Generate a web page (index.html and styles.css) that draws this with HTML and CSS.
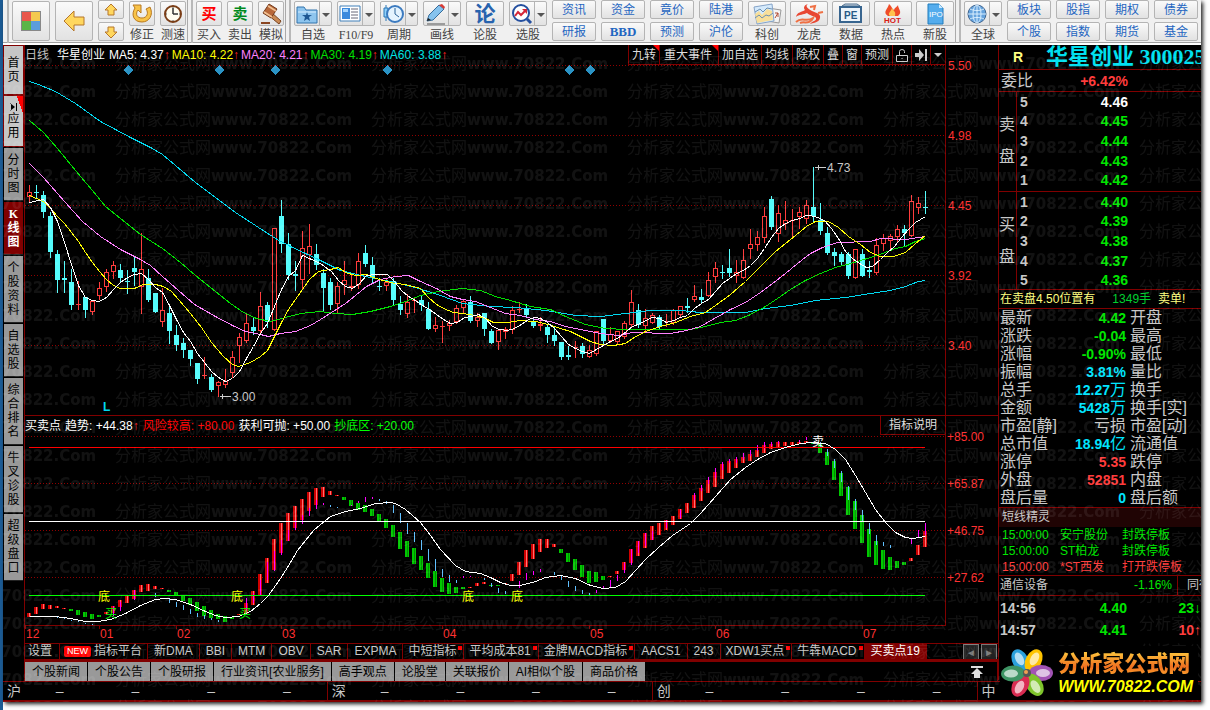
FILE: index.html
```html
<!DOCTYPE html>
<html lang="zh-CN">
<head>
    <meta charset="UTF-8">
    <meta name="viewport" content="width=device-width, initial-scale=1.0">
    <title>华星创业 300025 - 日线</title>
    <link rel="stylesheet" href="styles.css">
</head>
<body>
<div class="window">

    <header class="toolbar">
        <div class="group">
            <button class="tool tall" aria-label="首页"><svg width="22" height="22" viewBox="0 0 22 22"><rect x="1" y="1" width="20" height="20" fill="#888"/><rect x="2" y="2" width="9" height="9" fill="#e8584c"/><rect x="11" y="2" width="9" height="9" fill="#f3c94f"/><rect x="2" y="11" width="9" height="9" fill="#5cb548"/><rect x="11" y="11" width="9" height="9" fill="#5b9ddb"/></svg></button>
            <button class="tool tall" aria-label="后退"><svg width="22" height="22" viewBox="0 0 22 22"><path d="M1 11 11 1v6h10v8H11v6z" fill="#ffd75e" stroke="#b5762c"/></svg></button>
            <div class="pair narrow">
                <button aria-label="上"><svg width="14" height="14" viewBox="0 0 14 14"><path d="M7 1l6 6h-3v5H4V7H1z" fill="#ffd75e" stroke="#b5762c"/></svg></button>
                <button aria-label="下"><svg width="14" height="14" viewBox="0 0 14 14"><path d="M7 13l6-6h-3V2H4v5H1z" fill="#ffd75e" stroke="#b5762c"/></svg></button>
            </div>
            <button class="tool"><span class="face"><svg width="22" height="22" viewBox="0 0 22 22"><path d="M2 2h8v8L7 7c-3 4-1 8 4 8s7-5 4-9l4-2c4 8-1 15-8 15C2 19 0 11 4 5z" fill="#f8c348" stroke="#b87920"/></svg></span>修正</button>
            <button class="tool"><span class="face"><svg width="20" height="20" viewBox="0 0 20 20"><circle cx="10" cy="10" r="8" fill="#fffdf0" stroke="#7a3d16" stroke-width="2"/><path d="M10 10V4M10 10h5" stroke="#333" stroke-width="1.5"/><path d="M10 3v1M10 16v1M3 10h1M16 10h1" stroke="#555"/></svg></span>测速</button>
        </div>

        <div class="group">
            <button class="tool"><span class="face red">买</span>买入</button>
            <button class="tool"><span class="face green">卖</span>卖出</button>
            <button class="tool"><span class="face"><svg width="24" height="22" viewBox="0 0 24 22"><path d="M12 9l10 9-2 3L9 12z" fill="#c98a55" stroke="#7a4520"/><path d="M10 1l8 5-6 9-8-5z" fill="#b8683a" stroke="#70381a"/><path d="M9 3l8 5M5 9l8 5" stroke="#f2c293" stroke-width="1.5"/><path d="M2 20h9" stroke="#8a4520" stroke-width="2"/></svg></span>模拟</button>
        </div>

        <div class="group">
            <button class="tool split"><span class="face"><svg width="22" height="20" viewBox="0 0 22 20"><path d="M1 3h7l2 3h11v13H1z" fill="#8ec5ee" stroke="#3275ad"/><path d="M2 8h18" stroke="#d6edff"/><path d="M11 8l1 3h4l-3 2 1 4-3-2-3 2 1-4-3-2h4z" fill="#1d5793"/></svg></span><i></i>自选</button>
            <button class="tool split serif"><span class="face"><svg width="22" height="20" viewBox="0 0 22 20"><path d="M1 2h20v15H1z" fill="#fff" stroke="#4180ba"/><path d="M3 4h8v6H3zM3 10h8v5H3z" fill="#3c8add"/><path d="M4 5h5v3H4z" fill="#a4d4ff"/><path d="M12 5h7M12 8h7M12 11h7M12 14h7" stroke="#667"/></svg></span><i></i>F10/F9</button>
            <button class="tool split"><span class="face"><svg width="22" height="22" viewBox="0 0 22 22"><path d="M4 2v16" stroke="#2b76b6"/><path d="M2 5h4v9H2z" fill="#8fd1fa" stroke="#2b76b6"/><circle cx="13" cy="11" r="8" fill="#e5f4ff" stroke="#3c7bc0" stroke-width="2"/><path d="M13 5v6l4 3" fill="none" stroke="#2b6297"/></svg></span><i></i>周期</button>
            <button class="tool split"><span class="face"><svg width="22" height="22" viewBox="0 0 22 22"><path d="M2 21h18" stroke="#555"/><path d="M2 18l2-6L14 2l5 4L8 17z" fill="#86c3ee" stroke="#366d9c"/><path d="M14 2l3-1 3 3-1 2z" fill="#d83b35"/><path d="M2 18l1-3 3 2z" fill="#222"/></svg></span><i></i>画线</button>
            <button class="tool wide"><span class="face lun">论</span>论股</button>
            <button class="tool split"><span class="face"><svg width="22" height="22" viewBox="0 0 22 22"><circle cx="10" cy="10" r="8" fill="#fff" stroke="#244f9f" stroke-width="2"/><path d="M16 16l4 4" stroke="#244f9f" stroke-width="3"/><path d="M4 13l3-4 3 3 5-5" fill="none" stroke="#d52638" stroke-width="2"/><path d="M11 6h5v5z" fill="#d52638"/></svg></span><i></i>选股</button>
            <div class="pair"><button>资讯</button><button>研报</button></div>
            <div class="pair"><button>资金</button><button class="bbd">BBD</button></div>
            <div class="pair"><button>竟价</button><button>预测</button></div>
            <div class="pair"><button>陆港</button><button>沪伦</button></div>
            <div class="tools">
                <button class="tool wide"><span class="face"><svg width="30" height="22" viewBox="0 0 30 22"><path d="M16 5l13 2-2 13-12-2z" fill="#f4f4f4" stroke="#999"/><path d="M2 4l18-3 2 17-17 3z" fill="#d5eafc" stroke="#86a4c8"/><path d="M3 11l4-3 3 4 5-6 5 2 1 9-16 3z" fill="#f8df9a"/><path d="M3 15l4-3 3 3 4-3 3 1 4-3M3 9l5-3 3 3 4-4 5 1" fill="none" stroke="#6d91b3"/><path d="M23 15l3-5m-3 0h3v4" stroke="#b34c35" fill="none"/></svg></span>科创</button>
                <button class="tool wide"><span class="face"><svg width="30" height="22" viewBox="0 0 30 22"><path d="M14 1c-3 2-1 4 4 7 5 2 9 3 8 7-1 5-8 5-10 6 2-3 7-3 6-6-1-2-6-2-9-5-3 2-8 1-11 4 1-5 6-5 9-7-2-2-1-5 3-6z" fill="#e84833"/><path d="M2 19c6-6 10 1 17-4-3 7-9 3-13 5M16 4l5-1-1 4M24 10l5-1" fill="none" stroke="#ef7044" stroke-width="2"/></svg></span>龙虎</button>
                <button class="tool wide"><span class="face"><svg width="24" height="22" viewBox="0 0 24 22"><path d="M3 3l3-2h12l3 2z" fill="#ccd9e6" stroke="#51718f"/><rect x="1" y="4" width="21" height="15" fill="#eef5fb" stroke="#38658f" stroke-width="2"/><text x="5" y="16" class="pe">PE</text></svg></span>数据</button>
                <button class="tool wide"><span class="face"><svg width="24" height="22" viewBox="0 0 24 22"><path d="M7 13C1 9 7 6 8 1c4 4 3 5 5 6 1-3 3-3 4-5 0 4 5 7 0 11z" fill="#ef4c28"/><path d="M9 13c-3-3 1-4 2-8 2 4 4 3 3 8z" fill="#ffc34d"/><text x="3" y="20" class="hot">HOT</text></svg></span>热点</button>
                <button class="tool wide"><span class="face"><svg width="20" height="22" viewBox="0 0 20 22"><path d="M3 1h11l4 4v16H3z" fill="#54aced" stroke="#217cbc"/><path d="M14 1v4h4z" fill="#cceaff"/><text x="4" y="14" class="ipo">IPO</text></svg></span>新股</button>
            </div>
        </div>

        <div class="group">
            <button class="tool split"><span class="face"><svg width="22" height="22" viewBox="0 0 22 22"><circle cx="11" cy="11" r="9" fill="#66a3dd" stroke="#40658f"/><ellipse cx="11" cy="11" rx="4" ry="9" fill="none" stroke="#d9efff"/><path d="M2 11h18M4 6c4 2 10 2 14 0M4 16c4-2 10-2 14 0M11 2v18" fill="none" stroke="#d9efff"/></svg></span><i></i>全球</button>
            <div class="pair"><button>板块</button><button>个股</button></div>
            <div class="pair"><button>股指</button><button>指数</button></div>
            <div class="pair"><button>期权</button><button>期货</button></div>
            <div class="pair"><button>债券</button><button>基金</button></div>
        </div>
    </header>

    <main class="main">
        <nav class="sidebar">
            <button class="light home">首页</button>
            <button class="light apps"><svg width="8" height="8" viewBox="0 0 8 8"><path d="M0 0v8l5-4zM6 0h1v8H6zM0 0h1v8H0z"/></svg>应用</button>
            <button>分时图</button>
            <button class="active">K线图</button>
            <button>个股资料</button>
            <button>自选股</button>
            <button>综合排名</button>
            <button>牛叉诊股</button>
            <button>超级盘口</button>
        </nav>

        <section class="center">
            <div class="chart-head">
                <div class="info">
                    <span class="muted period">日线</span>
                    <span class="white name">华星创业</span>
                    <span class="white">MA5: 4.37<b>↑</b></span>
                    <span class="yellow">MA10: 4.22<b>↑</b></span>
                    <span class="pink">MA20: 4.21<b>↑</b></span>
                    <span class="lime">MA30: 4.19<b>↑</b></span>
                    <span class="aqua">MA60: 3.88<b>↑</b></span>
                </div>
                <div class="chart-tools">
                    <button class="flag">九转</button>
                    <button class="flag roomy">重大事件</button>
                    <button>加自选</button>
                    <button>均线</button>
                    <button>除权</button>
                    <button>叠</button>
                    <button>窗</button>
                    <button>预测</button>
                    <button aria-label="解锁"><svg width="12" height="14" viewBox="0 0 12 14"><path d="M.5 7.500h11v6H.5zM3.500 7V3.500q0-2 2.500-2t2.500 2V5M6 10v1" fill="none" stroke="#ccc"/></svg></button>
                    <button aria-label="到最后"><svg width="12" height="12" viewBox="0 0 12 12"><path d="M0 4h4V0l5 6-5 6V8H0zM10 0h2v12h-2z" fill="#ccc"/></svg></button>
                    <button class="drop" aria-label="更多"><svg width="8" height="4" viewBox="0 0 8 4"><path d="M0 0h8L4 4z" fill="#ccc"/></svg></button>
                </div>
            </div>
            <svg class="chart" id="price-chart" viewBox="25 65 973 350"></svg>

            <div class="chart-head sub">
                <div class="info">
                    <span class="white">买卖点</span>
                    <span class="white">趋势: +44.38<b>↑</b></span>
                    <span class="red">风险较高: +80.00</span>
                    <span class="white">获利可抛: +50.00</span>
                    <span class="bright">抄底区: +20.00</span>
                </div>
                <div class="chart-tools"><button class="explain">指标说明</button></div>
            </div>
            <svg class="chart" id="trend-chart" viewBox="25 435 973 208"></svg>

            <nav class="indicators">
                <button>设置</button>
                <button class="first"><em>NEW</em>指标平台</button>
                <button>新DMA</button>
                <button>BBI</button>
                <button>MTM</button>
                <button>OBV</button>
                <button>SAR</button>
                <button>EXPMA</button>
                <button class="dot">中短指标</button>
                <button class="dot">平均成本81</button>
                <button class="dot">金牌MACD指标</button>
                <button>AACS1</button>
                <button>243</button>
                <button class="dot">XDW1买点</button>
                <button class="dot">牛犇MACD</button>
                <button class="active">买卖点19</button>
                <span class="pager"><button aria-label="左">◄</button><button aria-label="右">►</button></span>
            </nav>
            <nav class="news">
                <button>个股新闻</button>
                <button>个股公告</button>
                <button>个股研报</button>
                <button>行业资讯[农业服务]</button>
                <button>高手观点</button>
                <button>论股堂</button>
                <button>关联报价</button>
                <button>AI相似个股</button>
                <button>商品价格</button>
                <svg class="to-top" width="12" height="12" viewBox="0 0 12 12"><path d="M0 0h12v2H0zM6 2l6 6H9v4H3V8H0z" fill="#ddd"/></svg>
            </nav>
        </section>

        <aside class="quote">
            <h1><small>R</small>华星创业 300025</h1>
            <p class="ratio"><span>委比</span><b class="up">+6.42%</b></p>
            <div class="book">
                <div class="side">卖<br>盘</div>
                <table>
                    <tr><th>5</th><td class="white">4.46</td></tr>
                    <tr><th>4</th><td>4.45</td></tr>
                    <tr><th>3</th><td>4.44</td></tr>
                    <tr><th>2</th><td>4.43</td></tr>
                    <tr><th>1</th><td>4.42</td></tr>
                </table>
            </div>
            <div class="book buy">
                <div class="side">买<br>盘</div>
                <table>
                    <tr><th>1</th><td>4.40</td></tr>
                    <tr><th>2</th><td>4.39</td></tr>
                    <tr><th>3</th><td>4.38</td></tr>
                    <tr><th>4</th><td>4.37</td></tr>
                    <tr><th>5</th><td>4.36</td></tr>
                </table>
            </div>
            <p class="notice">在卖盘4.50位置有<span>1349手</span>卖单!</p>
            <table class="stats">
                <tr><th>最新</th><td class="down">4.42</td><th>开盘</th></tr>
                <tr><th>涨跌</th><td class="down">-0.04</td><th>最高</th></tr>
                <tr><th>涨幅</th><td class="down">-0.90%</td><th>最低</th></tr>
                <tr><th>振幅</th><td>3.81%</td><th>量比</th></tr>
                <tr><th>总手</th><td>12.27<span>万</span></td><th>换手</th></tr>
                <tr><th>金额</th><td>5428<span>万</span></td><th>换手[实]</th></tr>
                <tr><th>市盈[静]</th><td class="muted"><span>亏损</span></td><th>市盈[动]</th></tr>
                <tr><th>总市值</th><td>18.94<span>亿</span></td><th>流通值</th></tr>
                <tr><th>涨停</th><td class="up">5.35</td><th>跌停</th></tr>
                <tr><th>外盘</th><td class="up">52851</td><th>内盘</th></tr>
                <tr><th>盘后量</th><td>0</td><th>盘后额</th></tr>
            </table>
            <h2>短线精灵</h2>
            <table class="alerts">
                <tr><td>15:00:00</td><td>安宁股份</td><td>封跌停板</td></tr>
                <tr><td>15:00:00</td><td>ST柏龙</td><td>封跌停板</td></tr>
                <tr class="up"><td>15:00:00</td><td>*ST西发</td><td>打开跌停板</td></tr>
            </table>
            <p class="sector"><span>通信设备</span><span class="down">-1.16%</span><a href="#">同行</a></p>
            <table class="ticks">
                <tr><th>14:56</th><td>4.40</td><td>23<i>↓</i></td></tr>
                <tr><th>14:57</th><td>4.41</td><td class="up">10<i>↑</i></td></tr>
            </table>
        </aside>
    </main>

    <footer class="status">
        <div><span>沪</span><i>–</i><i>–</i><i>–</i><i>–</i></div>
        <div><span>深</span><i>–</i><i>–</i><i>–</i><i>–</i></div>
        <div><span>创</span><i>–</i><i>–</i><i>–</i><i>–</i></div>
        <div class="last"><span>中</span></div>
    </footer>

    <svg class="watermark" aria-hidden="true">
        <defs>
            <pattern id="mark" x="112" y="3" width="256" height="28" patternUnits="userSpaceOnUse">
                <text x="0" y="21">分析家公式网<tspan>www.70822.Com</tspan></text>
            </pattern>
        </defs>
        <rect width="100%" height="100%" fill="url(#mark)"/>
    </svg>

    <div class="brand">
        <svg width="54" height="54" viewBox="0 0 54 54">
            <defs><ellipse id="petal" cx="27" cy="13" rx="8" ry="12"/><ellipse id="shine" cx="27" cy="11" rx="4" ry="7" fill="#fff" opacity=".65"/></defs>
            <g><use href="#petal" fill="#2aa0dc" transform="rotate(-28 27 27)"/><use href="#shine" transform="rotate(-28 27 27)"/></g>
            <g><use href="#petal" fill="#ffc400" transform="rotate(28 27 27)"/><use href="#shine" transform="rotate(28 27 27)"/></g>
            <g><use href="#petal" fill="#a253b4" transform="rotate(90 27 27)"/><use href="#shine" transform="rotate(90 27 27)"/></g>
            <g><use href="#petal" fill="#7fc52c" transform="rotate(148 27 27)"/><use href="#shine" transform="rotate(148 27 27)"/></g>
            <g><use href="#petal" fill="#d92c52" transform="rotate(208 27 27)"/><use href="#shine" transform="rotate(208 27 27)"/></g>
            <g><use href="#petal" fill="#3e9464" transform="rotate(268 27 27)"/><use href="#shine" transform="rotate(268 27 27)"/></g>
            <circle cx="27" cy="27" r="4" fill="#555"/><circle cx="26" cy="26" r="2" fill="#f0a050"/>
        </svg>
        <div><strong>分析家公式网</strong><span>WWW.70822.COM</span></div>
    </div>
</div>
<script src="chart.js"></script>
</body>
</html>
```
FILE: styles.css
```css
* {
    box-sizing: border-box;
}
body {
    margin: 0;
    padding: 0 9px 8px 3px;
    background: linear-gradient(to right, #1c5c96 3px, #fff 3px);
    font-family: "Liberation Sans", "Noto Sans CJK SC", sans-serif;
    font-size: 12px;
    line-height: 16px;
    color: #c8c8c8;
}
h1, h2, p {
    margin: 0;
    font-weight: normal;
}
button {
    margin: 0;
    padding: 0;
    border: 0;
    background: none;
    font: inherit;
    color: inherit;
    white-space: nowrap;
    cursor: pointer;
}
svg {
    display: block;
}
table {
    border-collapse: collapse;
}
td, th {
    padding: 0;
    font-weight: normal;
    text-align: left;
    white-space: nowrap;
}
.window {
    position: relative;
    overflow: hidden;
    background: #000;
    box-shadow: 2px 2px 4px #222;
}

.white { color: #fff; }
.yellow { color: #ff0; }
.pink { color: #ff80ff; }
.lime { color: #00e000; }
.bright { color: #0f0; }
.aqua { color: #00e5e5; }
.red { color: #f00; }
.up { color: #ff3c3c; }
.down { color: #00e600; }
.muted { color: #c0c0c0; }

/* toolbar */
.toolbar {
    display: flex;
    height: 45px;
    overflow: hidden;
    background: #f0f0f0;
    border-bottom: 2px solid #fff;
    box-shadow: inset 0 -1px #a0a0a0;
    color: #444;
}
.group {
    display: flex;
    flex: none;
    gap: 5px;
    padding: 0 1px 0 3px;
    margin-left: 3px;
    border-left: 2px solid #b8b8b8;
    border-right: 1px solid #aaa;
}
.group:first-child {
    margin-left: 4px;
}
.group:last-child {
    border-right: 0;
}
.tools {
    display: flex;
    gap: 4px;
}
.tool {
    position: relative;
    display: flex;
    flex-direction: column;
    align-items: center;
    gap: 1px;
    width: 26px;
    height: 43px;
    padding-top: 1px;
}
.split, .wide, .tall {
    width: 38px;
}
.face, .tall, .pair button {
    display: flex;
    align-items: center;
    justify-content: center;
    border: 1px solid #b4b4b4;
    border-radius: 2px;
    background: linear-gradient(#fafafa, #e2e2e2);
}
.face {
    width: 100%;
    height: 25px;
    flex: none;
}
.tall {
    height: 40px;
    padding: 0;
    margin-top: 1px;
}
.split .face {
    padding-right: 12px;
}
.split i {
    position: absolute;
    top: 2px;
    right: 0;
    width: 13px;
    height: 23px;
    border-left: 1px solid #b4b4b4;
}
.split i::after {
    content: "";
    position: absolute;
    top: 11px;
    left: 2px;
    border: 4px solid transparent;
    border-top-color: #555;
    border-bottom: 0;
}
.face.red, .face.green {
    font-size: 15px;
    font-weight: bold;
}
.face.green {
    color: #008a20;
}
.face.lun {
    font-size: 21px;
    font-weight: bold;
    color: #2863ae;
}
.serif {
    font-family: "Liberation Serif", serif;
}
.pair {
    display: grid;
    grid-template-rows: 19px 19px;
    gap: 3px;
    width: 44px;
    color: #1f66c1;
}
.narrow {
    width: 26px;
}
.bbd {
    font-family: "Liberation Serif", serif;
    font-weight: bold;
    font-size: 13px;
}
.pe {
    font: bold 10px "Liberation Sans", sans-serif;
    fill: #285a88;
}
.hot {
    font: bold 8px "Liberation Sans", sans-serif;
    fill: #d82015;
}
.ipo {
    font: 8px "Liberation Sans", sans-serif;
    fill: #fff;
}

/* main area */
.main {
    display: flex;
}
.sidebar {
    display: flex;
    flex-direction: column;
    flex: none;
    gap: 1px;
    width: 22px;
    padding: 1px 1px 0;
    border-right: 1px solid #800000;
}
.sidebar button {
    display: flex;
    align-items: center;
    justify-content: center;
    padding: 5px 3px;
    background: #999;
    color: #000;
    line-height: 14px;
    white-space: normal;
    word-break: break-all;
}
.sidebar button:not(.light) {
    border-bottom: 1px solid #222;
}
.sidebar .light {
    flex-direction: column;
    background: #c6c6c6;
    outline: 1px solid #800000;
    margin-bottom: 1px;
}
.sidebar .home {
    padding: 10px 3px;
}
.sidebar .apps {
    background: linear-gradient(to bottom left, red 6px, #c6c6c6 6px);
    padding: 7px 3px 6px;
    gap: 1px;
}
.sidebar .active {
    background: #800000;
    color: #fff;
    font-family: "Liberation Serif", "Noto Sans CJK SC", serif;
    font-weight: bold;
}
.center {
    flex: 1;
    min-width: 0;
}
.chart {
    width: 100%;
    height: auto;
    overflow: visible;
    font-size: 12px;
}
.chart-head {
    display: flex;
    justify-content: space-between;
    height: 20px;
    margin-right: 52px;
    border-right: 1px solid #800000;
}
.sub {
    position: relative;
}
.sub::before {
    content: "";
    position: absolute;
    left: 0;
    right: -53px;
    border-top: 1px solid #800000;
}
.info {
    display: flex;
    gap: 2px;
    line-height: 20px;
    white-space: nowrap;
}
.sub .info {
    gap: 4px;
    line-height: 22px;
}
.info b {
    color: #ff2020;
}
.info .period {
    margin-right: 6px;
}
.info .name {
    margin-right: 2px;
}
.chart-tools {
    display: flex;
    border-bottom: 1px solid #800000;
    color: #ddd;
}
.chart-tools button {
    position: relative;
    padding: 0 3px;
    border-left: 1px solid #800000;
}
.chart-tools .roomy {
    padding: 0 6px 0 4px;
}
.flag::after {
    content: "";
    position: absolute;
    top: 0;
    right: 0;
    border: 3px solid red;
    border-left-color: transparent;
    border-bottom-color: transparent;
}
.chart-tools .explain {
    padding: 0 8px;
}

/* chart drawing */
.grid { stroke: #900000; stroke-dasharray: 1 2; }
.frame { stroke: #800000; fill: none; }
.axis { fill: #ff3030; }
.note { fill: #c8c8c8; }
.chart path, .chart rect, .chart line {
    shape-rendering: crispEdges;
}
.line { fill: none; stroke-width: 1; }

/* indicator tabs */
.indicators {
    display: flex;
    height: 19px;
    border-top: 1px solid #800000;
    border-bottom: 3px solid #800000;
    line-height: 15px;
}
.indicators > button {
    position: relative;
    padding: 0 6px;
    border-right: 1px solid #800000;
}
.indicators > button:first-child {
    padding: 0 7px 0 3px;
}
.indicators .first {
    padding: 0 5px 0 4px;
}
.indicators .active {
    background: #800000;
    color: #fff;
}
.indicators em {
    display: inline-block;
    margin-right: 3px;
    padding: 0 3px;
    border-radius: 2px;
    background: red;
    color: #fff;
    font-size: 9px;
    font-style: normal;
    line-height: 11px;
    vertical-align: 1px;
}
.dot::after {
    content: "";
    position: absolute;
    top: 2px;
    right: 1px;
    width: 4px;
    height: 4px;
    background: red;
}
.indicators .dot {
    padding: 0 7px 0 5px;
}
.pager {
    display: flex;
    gap: 2px;
    margin-left: auto;
    margin-right: 1px;
}
.pager button {
    width: 16px;
    border: 1px solid #777;
    border-bottom: 0;
    background: #222;
    color: #777;
    font-size: 10px;
    line-height: 13px;
}
.news {
    display: flex;
    height: 19px;
    gap: 1px;
    border-right: 1px solid #800000;
}
.news button {
    padding: 0 7px;
    background: #999;
    color: #000;
    line-height: 18px;
}
.to-top {
    margin: 4px 14px 0 auto;
}

/* quote panel */
.quote {
    flex: none;
    width: 203px;
    height: 635px;
    overflow: hidden;
    border-left: 1px solid #800000;
}
.quote h1 {
    height: 24px;
    padding-left: 14px;
    font: bold 22px/24px "Liberation Serif", "Noto Sans CJK SC", serif;
    color: #00e0f0;
    white-space: nowrap;
}
.quote small {
    display: inline-block;
    width: 33px;
    font: bold 14px/24px "Liberation Sans", sans-serif;
    color: #ffff80;
    vertical-align: top;
}
.ratio {
    display: flex;
    justify-content: space-between;
    height: 23px;
    padding: 0 73px 0 2px;
    border: solid #800000;
    border-width: 1px 0;
    font-size: 16px;
    line-height: 22px;
}
.ratio b {
    font-size: 14px;
}
.book {
    display: flex;
    height: 99px;
    font-size: 14px;
    line-height: 18px;
}
.book.buy {
    border-top: 1px solid #800000;
    border-bottom: 1px solid #800000;
}
.side {
    width: 18px;
    padding-top: 17px;
    border-right: 1px solid #800000;
    font-size: 16px;
    line-height: 32px;
}
.book table {
    width: 111px;
    height: 98px;
}
.book th, .book td {
    font-weight: bold;
}
.book th {
    padding-left: 3px;
}
.book td {
    text-align: right;
    color: #00e600;
}
.book td.white {
    color: #fff;
}
.notice {
    height: 19px;
    padding-left: 1px;
    border-bottom: 1px solid #800000;
    color: #ffff80;
    line-height: 18px;
    white-space: nowrap;
}
.notice span {
    margin: 0 7px 0 17px;
    color: #00d030;
}
.stats {
    width: 202px;
    table-layout: fixed;
    font-size: 16px;
    line-height: 18px;
}
.stats td {
    width: 68px;
    text-align: right;
    font-size: 14px;
    font-weight: bold;
    color: #00e5ff;
}
.stats th {
    width: 59px;
    padding-left: 1px;
}
.stats td + th {
    width: 75px;
    padding-left: 4px;
}
.stats td span {
    font-size: 16px;
    font-weight: normal;
}
.stats td.up { color: #ff3c3c; }
.stats td.down { color: #00e600; }
.stats td.muted { color: #c8c8c8; }
.quote h2 {
    height: 20px;
    padding-left: 3px;
    border-top: 1px solid #800000;
    background: #200404;
    font-size: 12px;
    line-height: 19px;
}
.alerts {
    width: 202px;
    color: #00e600;
}
.alerts td {
    width: 62px;
    padding-left: 1px;
}
.alerts td:first-child {
    width: 60px;
    padding-left: 3px;
}
.alerts td:last-child {
    width: 80px;
}
.alerts .up {
    color: #ff3c3c;
}
.sector {
    display: flex;
    justify-content: space-between;
    height: 21px;
    border: solid #800000;
    border-width: 1px 0;
    padding-left: 1px;
    line-height: 19px;
    white-space: nowrap;
}
.sector a {
    width: 24px;
    padding-left: 9px;
    border-left: 1px solid #800000;
    color: inherit;
    text-decoration: none;
}
.sector .down {
    margin-left: auto;
    margin-right: 5px;
}
.ticks {
    width: 202px;
    margin-top: 1px;
    table-layout: fixed;
    font-size: 14px;
    line-height: 22px;
}
.ticks th, .ticks td {
    font-weight: bold;
}
.ticks th {
    width: 50px;
    padding-left: 1px;
}
.ticks td {
    width: 78px;
    text-align: right;
    color: #00e600;
}
.ticks td:last-child {
    width: 74px;
}
.ticks .up {
    color: #ff3c3c;
}
.ticks i {
    font-style: normal;
}

/* bottom status line */
.status {
    display: flex;
    height: 21px;
    border-top: 1px solid #800000;
    border-bottom: 2px solid #800000;
    font-size: 14px;
    line-height: 18px;
}
.status div {
    display: flex;
    flex: 325;
    min-width: 0;
    padding-left: 4px;
    border-right: 1px solid #800000;
}
.status .last {
    flex: 223;
    border-right: 0;
}
.status span {
    flex: 49;
}
.status .last span {
    flex: none;
}
.status i {
    flex: 76;
    font-style: normal;
}
.status i:last-child {
    flex: 44;
}
.watermark {
    position: absolute;
    top: 45px;
    left: 0;
    width: 100%;
    height: calc(100% - 45px);
    pointer-events: none;
    opacity: .07;
    fill: #fff;
    font-size: 16px;
}
.watermark tspan {
    font-family: "DejaVu Sans", sans-serif;
    font-weight: bold;
    font-size: 15px;
}
.brand {
    position: absolute;
    right: 3px;
    bottom: 2px;
    display: flex;
    align-items: center;
    gap: 4px;
    padding-right: 5px;
    background: #000;
    font-weight: bold;
    white-space: nowrap;
}
.brand strong {
    display: block;
    background: linear-gradient(#ffd040, #f07020 60%, #ffb030);
    background-clip: text;
    -webkit-background-clip: text;
    color: transparent;
    font-size: 22px;
    line-height: 28px;
}
.brand span {
    display: block;
    color: #ff0;
    font-size: 16px;
    font-style: italic;
    line-height: 18px;
}
```
FILE: chart.js
```js
const STEP = 7;
const LEFT = 29;

// high, body top, body bottom, low, rising
const candles = [
    [185,192,197,201,1],[185,192,193,198,0],[191,195,212,217,0],[212,216,252,257,0],[250,254,280,292,0],[261,278,280,292,0],
    [269,282,305,309,0],[281,304,304,309,1],[297,297,310,317,0],[301,301,312,314,1],[282,288,296,299,1],[269,272,287,291,1],
    [261,265,272,278,1],[264,270,278,281,0],[270,281,282,293,0],[257,268,272,285,0],[233,269,287,313,1],[269,278,300,301,0],
    [293,293,312,312,0],[288,310,322,326,1],[305,313,331,343,0],[325,335,345,350,0],[338,343,350,357,0],[350,350,359,365,0],
    [363,363,379,383,0],[357,375,375,378,1],[374,377,390,391,0],[381,382,386,396,1],[369,381,385,387,1],[351,357,373,377,1],
    [333,337,346,362,1],[314,323,341,342,1],[318,327,331,334,0],[292,306,331,334,1],[302,305,322,327,0],[228,228,330,330,1],
    [200,216,244,252,0],[233,244,275,279,0],[261,274,276,290,0],[231,248,280,288,1],[224,246,255,273,1],[244,254,265,269,0],
    [269,273,288,310,0],[278,282,305,309,0],[282,286,304,313,1],[261,280,285,294,1],[274,286,288,290,1],[253,261,285,288,1],
    [245,253,264,266,0],[257,265,278,282,0],[278,286,287,290,0],[278,282,286,290,1],[278,281,300,304,0],[296,304,310,314,0],
    [294,302,314,317,1],[298,300,301,312,1],[296,300,305,310,0],[302,309,329,329,0],[317,325,329,331,1],[321,326,327,342,1],
    [320,323,326,330,1],[305,308,322,323,1],[299,301,308,313,1],[296,302,321,322,0],[313,317,321,326,1],[313,313,329,335,0],
    [329,331,343,343,0],[330,330,342,349,1],[327,329,332,338,1],[306,310,330,333,1],[302,309,310,312,1],[304,309,315,316,0],
    [317,321,326,327,0],[317,324,326,330,1],[325,327,335,342,0],[327,335,341,345,0],[342,342,357,359,0],[346,355,357,359,0],
    [341,347,348,357,1],[343,346,354,357,0],[345,350,357,357,1],[331,331,354,355,1],[319,319,341,344,0],[327,334,341,342,1],
    [331,331,342,343,1],[321,323,337,338,1],[290,302,325,326,1],[304,310,325,327,0],[309,318,326,330,1],[313,315,323,323,1],
    [315,317,327,328,0],[314,321,322,326,1],[309,310,323,324,1],[306,306,315,317,1],[298,306,308,312,0],[285,296,300,301,1],
    [289,297,300,302,0],[272,280,296,296,1],[262,268,277,282,1],[265,272,273,278,0],[249,268,273,276,0],[260,272,276,282,1],
    [249,260,278,278,1],[229,244,249,258,1],[231,237,245,250,1],[207,216,238,242,1],[196,199,227,229,0],[205,213,234,241,1],
    [201,220,224,229,1],[209,220,221,236,1],[207,212,217,228,1],[200,205,219,223,1],[167,207,216,222,0],[203,220,231,234,0],
    [227,233,253,254,0],[248,252,256,265,0],[252,254,262,264,0],[252,254,276,278,0],[249,249,278,278,1],[249,254,276,276,0],
    [261,270,272,277,0],[238,245,273,274,1],[234,238,244,250,1],[234,236,241,249,1],[225,229,237,241,1],[225,229,233,246,0],
    [195,201,236,236,1],[197,203,208,213,1],[191,207,208,213,0]
];

const averages = {
    '#00d8f0': '29,81 38,84 55,91 75,103 100,121 130,137 150,147 162,154 175,165 195,182 215,197 235,212 255,225 275,238 290,246 305,253 318,259 340,270 365,276 390,281 415,287 440,295 462,303 490,306 515,307 545,310 575,315 600,316 625,313 650,310 680,310 700,312 745,312 765,308 790,305 815,300 845,297 870,293 890,290 905,286 918,281 925,280',
    '#00e000': '29,120 43,132 57,148 75,170 92,190 105,206 120,218 140,234 162,248 180,262 195,275 215,291 230,303 243,312 256,318 270,321 285,317 300,313 320,311 335,313 352,314 370,311 390,306 405,301 420,295 438,291 462,288 480,290 495,296 510,300 530,306 550,309 565,316 585,324 605,328 625,329 660,329 690,329 705,326 720,322 735,320 748,315 765,306 780,296 790,289 805,280 820,273 835,267 850,263 870,257 882,253 895,248 905,246 915,241 925,238',
    '#ff80ff': '29,163 43,177 64,201 82,221 100,236 120,249 138,258 150,265 162,276 178,290 194,304 215,316 232,325 245,331 260,334 268,336 280,333 295,331 310,325 320,319 331,312 345,303 355,295 366,286 380,279 395,276 408,275 420,281 436,288 450,296 462,299 475,301 490,307 505,313 520,315 535,319 550,321 565,326 585,330 600,333 618,335 632,332 670,333 686,330 700,326 714,318 730,309 745,302 760,292 772,283 785,273 797,263 810,253 822,247 837,242 870,241 880,238 905,239 918,237 925,236',
    '#ffff00': '29,195 43,201 50,208 57,216 64,223 78,241 85,252 92,262 99,271 106,279 113,285 120,288 134,288 143,284 155,284 163,286 171,291 178,299 190,313 201,327 211,342 223,356 232,364 238,366 250,362 260,356 267,350 274,336 281,322 288,309 295,299 302,289 309,279 318,271 330,269 338,267 345,272 355,275 366,274 373,277 382,280 395,283 405,284 420,288 428,297 436,304 443,308 453,312 462,313 475,315 485,318 493,322 507,322 520,320 535,321 548,324 560,328 570,331 580,336 590,341 600,344 613,345 625,343 632,338 645,331 660,326 675,322 690,316 705,312 715,305 730,294 745,281 760,266 775,251 785,243 795,235 806,226 815,221 828,221 838,227 848,236 860,244 870,252 880,256 893,256 905,252 915,243 925,235',
    '#ffffff': '29,202 38,200 43,199 50,207 57,221 64,242 71,264 78,285 85,297 92,300 99,301 106,297 113,289 120,282 127,277 134,274 141,273 148,279 155,287 162,292 169,305 176,319 183,332 190,341 197,353 204,362 211,371 218,377 225,381 232,378 239,371 246,358 253,346 260,333 267,323 274,306 281,289 288,276 295,270 302,255 309,258 320,263 324,266 331,271 338,280 345,286 352,288 359,283 366,275 376,274 387,274 394,281 401,290 408,296 415,300 422,305 429,309 436,314 443,319 450,323 457,322 464,317 471,316 478,314 485,318 492,326 499,329 507,330 514,328 521,324 528,319 534,317 540,318 547,322 554,328 561,336 568,344 575,348 582,351 589,353 596,349 603,345 610,341 617,338 626,331 632,326 640,323 645,320 652,317 659,318 666,322 673,320 680,317 687,315 694,308 701,303 708,299 715,291 722,283 729,278 736,273 743,270 750,265 757,258 764,248 771,237 778,228 785,223 792,220 799,218 806,215 810,215 817,217 824,220 831,228 838,238 845,251 852,258 859,263 866,267 872,266 880,259 887,252 894,246 901,237 908,229 915,222 925,216'
};

// top, bottom, r = red / g = green, one per candle
const trendBars = [
    [613,617,'r'],[607,614,'r'],[604,609,'r'],[605,609,'r'],[606,608,'r'],[608,609,'r'],[609,611,'g'],[610,615,'g'],[612,617,'g'],[614,619,'g'],
    [615,617,'g'],[612,614,'r'],[606,613,'r'],[600,607,'r'],[596,603,'r'],[590,599,'r'],[585,592,'r'],[584,591,'r'],[586,589,'r'],[588,589,'r'],
    [590,592,'g'],[592,596,'g'],[595,601,'g'],[598,605,'g'],[602,611,'g'],[606,616,'g'],[610,618,'g'],[614,619,'g'],[616,622,'g'],[617,619,'g'],
    [614,615,'r'],[603,614,'r'],[591,605,'r'],[574,595,'r'],[558,583,'r'],[539,570,'r'],[523,553,'r'],[513,541,'r'],[506,528,'r'],[499,520,'r'],
    [492,511,'r'],[488,505,'r'],[487,497,'r'],[491,495,'r'],[495,496,'r'],[497,500,'g'],[500,506,'g'],[503,510,'g'],[505,512,'g'],[509,516,'g'],
    [514,522,'g'],[519,528,'g'],[525,537,'g'],[532,549,'g'],[541,557,'g'],[548,564,'g'],[556,570,'g'],[563,578,'g'],[571,587,'g'],[578,592,'g'],
    [583,594,'g'],[587,593,'g'],[587,589,'g'],[587,588,'r'],[583,586,'r'],[582,584,'r'],[585,586,'g'],[585,586,'g'],[583,584,'r'],[574,581,'r'],
    [562,575,'r'],[550,567,'r'],[544,559,'r'],[539,552,'r'],[539,548,'r'],[544,547,'r'],[549,553,'g'],[553,562,'g'],[559,570,'g'],[565,577,'g'],
    [571,583,'g'],[572,582,'g'],[576,580,'g'],[576,577,'r'],[571,574,'r'],[562,570,'r'],[549,563,'r'],[541,556,'r'],[533,548,'r'],[526,540,'r'],
    [523,535,'r'],[520,530,'r'],[516,525,'r'],[509,519,'r'],[503,513,'r'],[495,508,'r'],[488,501,'r'],[480,493,'r'],[472,487,'r'],[464,479,'r'],
    [461,473,'r'],[459,468,'r'],[457,463,'r'],[454,461,'r'],[450,457,'r'],[445,453,'r'],[444,449,'r'],[442,447,'r'],[442,446,'r'],[442,445,'r'],
    [442,444,'r'],[441,443,'r'],[443,444,'g'],[444,453,'g'],[452,465,'g'],[461,480,'g'],[473,496,'g'],[487,515,'g'],[501,529,'g'],[515,543,'g'],
    [529,557,'g'],[541,565,'g'],[550,569,'g'],[557,570,'g'],[561,568,'g'],[562,565,'g'],[558,561,'r'],[545,555,'r'],[531,547,'r']
];

// index, top, bottom
const rising = [
    [12,606,616],[13,602,611],[15,590,600],[31,598,610],[32,593,603],[33,580,595],[34,562,580],[35,551,571],[36,540,555],[37,530,541],[38,520,530],
    [39,515,524],[40,508,516],[41,500,509],[42,503,505],[46,505,506],[47,501,503],[48,497,502],[49,497,499],[62,576,578],[63,576,577],
    [70,581,588],[71,573,580],[72,571,575],[73,569,572],[81,590,593],[82,586,589],[83,580,587],[84,575,581],[85,563,573],[86,549,565],
    [87,541,553],[88,533,546],[89,531,540],[91,520,528],[93,510,518],[95,493,500],[96,485,491],[97,477,484],[98,468,478],[99,462,470],[100,459,463],
    [101,457,463],[102,453,459],[103,450,456],[104,445,451],[105,442,449],[106,442,446],[107,441,444],[110,440,442],[111,437,440],[126,539,544],[127,530,537],[128,523,535]
];
const falling = [
    [4,617,618],[5,618,619],[6,620,621],[7,621,622],[8,623,624],[9,624,625],[18,593,597],[20,598,603],[21,602,607],[22,605,610],[23,609,614],
    [24,613,617],[25,615,619],[26,618,620],[27,620,622],[43,505,507],[44,507,508],[50,499,501],[51,501,504],[52,505,513],[53,513,523],[54,523,534],[55,532,542],
    [56,540,550],[57,549,561],[58,559,571],[59,569,577],[60,575,582],[61,580,583],[65,578,580],[66,583,587],[67,588,593],[68,591,594],
    [75,572,575],[76,576,580],[77,581,587],[78,586,591],[79,590,594],[80,593,595],[113,442,447],[114,449,456],[115,459,468],[116,471,482],
    [117,486,500],[118,499,510],[119,510,521],[120,523,534],[121,535,545],[122,542,546],[123,545,548]
];
const trendLine = '29,616 55,616 70,618 85,621 97,621 110,619 125,613 140,605 155,599 164,598 175,599 190,604 205,611 215,615 225,617 238,616 250,611 260,603 268,595 280,578 290,562 297,550 305,540 313,530 320,524 330,516 345,511 360,508 375,503 390,502 395,503 405,509 420,522 430,535 440,549 455,565 465,571 480,573 490,577 500,582 510,585 520,585 535,581 545,577 560,575 575,578 590,585 603,588 615,587 625,581 635,570 645,559 658,547 672,535 690,523 700,513 715,496 730,479 745,467 757,459 770,452 785,447 800,443 812,442 825,443 835,449 845,459 855,475 865,492 875,509 885,522 895,532 905,537 912,538 925,536';

const rect = (x, y, w, h, fill) => `<rect x="${x}" y="${y}" width="${w}" height="${h}" fill="${fill}"/>`;
const text = (x, y, s, cls) => `<text x="${x}" y="${y}" class="${cls}">${s}</text>`;
const line = (points, color) => `<path class="line" stroke="${color}" d="M${points.split(' ').join('L')}" transform="translate(.5 .5)"/>`;
const grid = y => `<path class="grid" d="M25 ${y}.5H945"/>`;

function drawPrice() {
    let out = '';
    [[65, '5.50'], [135, '4.98'], [205, '4.45'], [275, '3.92'], [345, '3.40']].forEach(([y, label]) => {
        out += grid(y) + text(948, y + 5, label, 'axis');
    });
    out += '<path class="frame" d="M945.5 65V415"/>';

    candles.forEach(([high, top, bottom, low, up], i) => {
        const x = LEFT + i * STEP;
        const color = up ? '#ff3c3c' : '#54fcfc';
        out += rect(x, high, 1, low - high + 1, color);
        out += rect(x - 2, top, 5, Math.max(bottom - top, 1), color);
        if (up && bottom - top > 2) {
            out += rect(x - 1, top + 1, 3, bottom - top - 2, '#000');
        }
    });
    for (const color in averages) {
        out += line(averages[color], color);
    }
    [128, 219, 275, 387, 569, 590].forEach(x => {
        out += `<path d="M${x} 65l5 5-5 5-5-5z" fill="#2a93c5"/>`;
    });
    out += '<path class="line" stroke="#ccc" d="M815 167.500h11M818 165v5M220 396.500h11M222 394v5"/>';
    out += text(827, 172, '4.73', 'note') + text(232, 401, '3.00', 'note');
    out += '<text x="103" y="411" fill="#00d8f0" font-weight="bold">L</text>';
    document.getElementById('price-chart').innerHTML = out;
}

function drawTrend() {
    let out = '';
    [[436, '+85.00'], [483, '+65.87'], [530, '+46.75'], [577, '+27.62']].forEach(([y, label]) => {
        out += grid(y) + text(947, y + 5, label, 'axis');
    });
    out += '<path class="frame" d="M945.5 435V625.500H25"/>';
    [[25, '12'], [99, '01'], [176, '02'], [281, '03'], [442, '04'], [589, '05'], [715, '06'], [862, '07']].forEach(([x, label]) => {
        out += `<path class="frame" d="M${x}.5 625v4"/>` + text(x + 1, 638, label, 'axis');
    });
    trendBars.forEach(([top, bottom, kind], i) => {
        const x = LEFT + i * STEP;
        const h = Math.max(bottom - top, 1);
        out += rect(x - 2, top, 4, h, kind === 'r' ? '#d00000' : '#00c800');
        out += rect(x, top, 1, h, kind === 'r' ? '#ff7070' : '#009000');
    });
    rising.forEach(([i, top, bottom]) => { out += rect(LEFT + i * STEP, top, 1, bottom - top, '#ff00ff'); });
    falling.forEach(([i, top, bottom]) => { out += rect(LEFT + i * STEP, top, 1, bottom - top, '#60c0ff'); });

    out += rect(29, 447, 896, 1, '#ff0000') + rect(29, 521, 896, 1, '#ffffff') + rect(29, 595, 896, 1, '#00ff00');
    out += line(trendLine, '#fff');

    [98, 231, 462, 511].forEach(x => { out += `<text x="${x}" y="601" fill="#ff0">底</text>`; });
    [105, 239].forEach(x => { out += `<text x="${x}" y="618" fill="#0f0">买</text>`; });
    out += '<text x="812" y="446" fill="#fff">卖</text>';
    document.getElementById('trend-chart').innerHTML = out;
}

drawPrice();
drawTrend();
```
